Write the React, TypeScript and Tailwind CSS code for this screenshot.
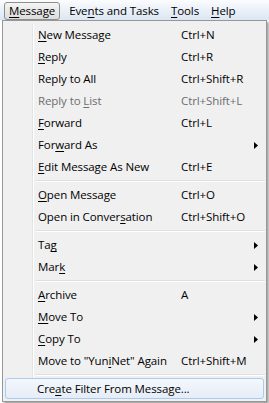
import React from "react";

type Item =
  | { sep: true }
  | {
      sep?: false;
      label: string;
      u: number; // underline index, -1 none
      shortcut?: string;
      arrow?: boolean;
      disabled?: boolean;
      hl?: boolean;
    };

const items: Item[] = [
  { label: "New Message", u: 0, shortcut: "Ctrl+N" },
  { label: "Reply", u: 0, shortcut: "Ctrl+R" },
  { label: "Reply to All", u: -1, shortcut: "Ctrl+Shift+R" },
  { label: "Reply to List", u: 9, shortcut: "Ctrl+Shift+L", disabled: true },
  { label: "Forward", u: 0, shortcut: "Ctrl+L" },
  { label: "Forward As", u: 3, arrow: true },
  { label: "Edit Message As New", u: 0, shortcut: "Ctrl+E" },
  { sep: true },
  { label: "Open Message", u: 0, shortcut: "Ctrl+O" },
  { label: "Open in Conversation", u: 14, shortcut: "Ctrl+Shift+O" },
  { sep: true },
  { label: "Tag", u: 2, arrow: true },
  { label: "Mark", u: 3, arrow: true },
  { sep: true },
  { label: "Archive", u: 0, shortcut: "A" },
  { label: "Move To", u: 0, arrow: true },
  { label: "Copy To", u: 0, arrow: true },
  { label: 'Move to "YuniNet" Again', u: 12, shortcut: "Ctrl+Shift+M" },
  { sep: true },
  { label: "Create Filter From Message...", u: 3, hl: true },
];

function Mn({ text, u }: { text: string; u: number }) {
  if (u < 0) return <>{text}</>;
  return (
    <>
      {text.slice(0, u)}
      <span className="underline underline-offset-[2px]">{text[u]}</span>
      {text.slice(u + 1)}
    </>
  );
}

function Arrow() {
  return (
    <svg width="4" height="7" viewBox="0 0 4 7" className="block">
      <path d="M0 0 L4 3.5 L0 7 Z" fill="#000" />
    </svg>
  );
}

export default function App() {
  return (
    <div
      className="w-[269px] h-[403px] bg-white overflow-hidden text-[11.5px] tracking-[-0.1px] text-black"
      style={{ fontFamily: '"Open Sans", "Noto Sans", sans-serif' }}
    >
      {/* menu bar */}
      <div className="h-[20px] flex items-start pt-[2px] bg-gradient-to-b from-[#fbfcfe] to-[#dbe6f3]">
        <div className="ml-[4px] h-[18px] px-[4px] flex items-center border border-[#8e8f8f] rounded-[3px] bg-gradient-to-b from-[#f4f4f4] to-[#dcdcdc] leading-none">
          <Mn text="Message" u={0} />
        </div>
        <div className="h-[17px] ml-[3px] px-[6px] flex items-center leading-none">
          <Mn text="Events and Tasks" u={3} />
        </div>
        <div className="h-[17px] px-[6px] flex items-center leading-none">
          <Mn text="Tools" u={0} />
        </div>
        <div className="h-[17px] px-[6px] flex items-center leading-none">
          <Mn text="Help" u={0} />
        </div>
      </div>

      {/* popup */}
      <div className="ml-[2px] w-[265px] border border-[#979797] bg-[#f0f0f0] pt-[3px] pb-[1px] shadow-[2px_2px_2px_rgba(0,0,0,0.35)]">
        {items.map((it, i) => {
          if (it.sep) {
            return (
              <div key={i} className="flex h-[6px]">
                <div className="w-[30px] shrink-0 border-r border-[#e2e3e3]" />
                <div className="w-px bg-white" />
                <div className="flex-1 flex flex-col justify-center pl-[1px] pr-[1px]">
                  <div className="h-px bg-[#e0e0e0]" />
                  <div className="h-px bg-white" />
                </div>
              </div>
            );
          }
          if (it.hl) {
            return (
              <div key={i} className="h-[22px] flex px-[2px]">
                <div className="flex-1 h-[21px] flex items-center border border-[#a8cbef] rounded-[3px] bg-gradient-to-b from-[#f4f7fc] to-[#e6edf7]">
                  <div className="pl-[31px]">
                    <Mn text={it.label} u={it.u} />
                  </div>
                </div>
              </div>
            );
          }
          return (
            <div
              key={i}
              className={`flex h-[22px] ${it.disabled ? "text-[#6d6d6d]" : "text-black"}`}
            >
              <div className="w-[30px] shrink-0 border-r border-[#e2e3e3]" />
              <div className="w-px bg-white" />
              <div className="flex-1 flex items-center">
                <div className="w-[147px] pl-[4px] whitespace-nowrap">
                  <Mn text={it.label} u={it.u} />
                </div>
                <div className="flex-1 whitespace-nowrap">{it.shortcut ?? ""}</div>
                {it.arrow && (
                  <div className="w-[12px] flex">
                    <Arrow />
                  </div>
                )}
              </div>
            </div>
          );
        })}
      </div>
    </div>
  );
}
